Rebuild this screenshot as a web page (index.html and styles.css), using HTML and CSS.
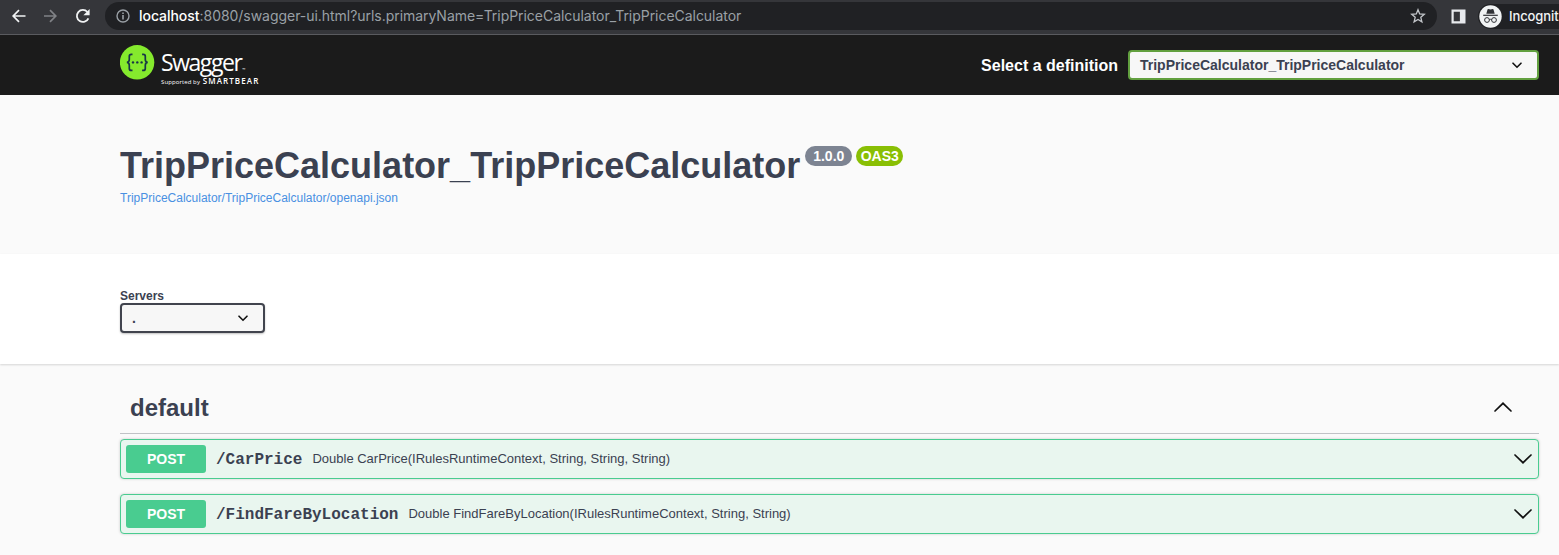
FILE: index.html
```html
<!DOCTYPE html>
<html lang="en">
<head>
<meta charset="utf-8">
<title>Swagger UI</title>
<link rel="stylesheet" href="styles.css">
</head>
<body>
<div class="browser">
  <svg class="nav-icon" width="16" height="16" viewBox="0 0 16 16" fill="none" stroke="#f1f3f4" stroke-width="1.7"><path d="M14.5 8H2.4M8 2.2 2.2 8 8 13.8"/></svg>
  <svg class="nav-icon" width="16" height="16" viewBox="0 0 16 16" fill="none" stroke="#808286" stroke-width="1.7"><path d="M1 8h11.6M7 2.2 12.8 8 7 13.8"/></svg>
  <svg class="nav-icon" width="16" height="16" viewBox="0 0 16 16"><path d="M13.4 10.3A6 6 0 1 1 12.4 4" fill="none" stroke="#f1f3f4" stroke-width="1.8"/><path d="M14.6 1v6.2H8.4z" fill="#f1f3f4"/></svg>
  <div class="address">
    <svg class="info-icon" width="14" height="14" viewBox="0 0 14 14"><circle cx="7" cy="7" r="6" fill="none" stroke="#9aa0a6" stroke-width="1.4"/><path d="M6.2 6h1.6v4.4H6.2zM6.2 3.5h1.6v1.5H6.2z" fill="#9aa0a6"/></svg>
    <span class="url"><b>localhost</b>:8080/swagger-ui.html?urls.primaryName=TripPriceCalculator_TripPriceCalculator</span>
    <svg class="star" width="16" height="16" viewBox="0 0 16 16" fill="none" stroke="#c4c7cb" stroke-width="1.3"><path d="m8 1.7 1.7 4.2 4.6.4-3.5 3 1.1 4.5L8 11.4l-3.9 2.4 1.1-4.5-3.5-3 4.6-.4z"/></svg>
  </div>
  <svg class="panel" width="15" height="15" viewBox="0 0 15 15"><path d="M.5.5h14v14H.5zM2.7 2.7v9.6h6.2V2.7z" fill="#e8eaed" fill-rule="evenodd"/></svg>
  <div class="profile">
    <svg width="23" height="23" viewBox="0 0 23 23"><circle cx="11.5" cy="11.5" r="11.2" fill="#f1f3f4"/><path d="M7.3 8.7 8.5 4.4q.2-.6.8-.4l2.2.6 2.2-.6q.6-.2.8.4l1.2 4.3z" fill="#303236"/><path d="M4.2 10.3h14.6" stroke="#303236" stroke-width="1.2"/><g fill="none" stroke="#303236" stroke-width="1"><circle cx="8" cy="15" r="2.4"/><circle cx="15" cy="15" r="2.4"/><path d="M10.4 14.7q1.1-.8 2.2 0"/></g></svg>
    <span>Incognit</span>
  </div>
</div>
<header class="topbar">
  <div class="logo">
    <svg width="35" height="35" viewBox="0 0 35 35"><circle cx="17.1" cy="17.3" r="17.2" fill="#85ea2d"/><g fill="none" stroke="#173647" stroke-width="1.7"><path d="M12.5 9.4h-1.2q-2 0-2 2v3.2q0 2.6-2.4 2.8 2.4.2 2.4 2.8v3.2q0 2 2 2h1.2M22.1 9.4h1.2q2 0 2 2v3.2q0 2.6 2.4 2.8-2.4.2-2.4 2.8v3.2q0 2-2 2h-1.2"/></g><g fill="#173647"><circle cx="13" cy="17.4" r="1.2"/><circle cx="17.3" cy="17.4" r="1.2"/><circle cx="21.6" cy="17.4" r="1.2"/></g></svg>
    <div class="wordmark">
      <div class="brand">Swagger<small>™</small></div>
      <div class="support">Supported by <b>SMARTBEAR</b></div>
    </div>
  </div>
  <div class="definition">
    <span class="definition-label">Select a definition</span>
    <div class="select definition-select"><span>TripPriceCalculator_TripPriceCalculator</span>
      <svg width="10" height="7" viewBox="0 0 10 7" fill="none" stroke="#111" stroke-width="1.6" stroke-linecap="round"><path d="m1 1.2 4 4 4-4"/></svg></div>
  </div>
</header>
<section class="info">
  <div class="title-row"><h1>TripPriceCalculator_TripPriceCalculator</h1><span class="badge">1.0.0</span><span class="badge oas">OAS3</span></div>
  <a class="spec">TripPriceCalculator/TripPriceCalculator/openapi.json</a>
</section>
<section class="servers">
  <div class="servers-label">Servers</div>
  <div class="select server-select"><span>.</span>
    <svg width="10" height="7" viewBox="0 0 10 7" fill="none" stroke="#111" stroke-width="1.6" stroke-linecap="round"><path d="m1 1.2 4 4 4-4"/></svg></div>
</section>
<main class="operations">
  <div class="tag"><h2>default</h2>
    <svg width="20" height="12" viewBox="0 0 20 12" fill="none" stroke="#111" stroke-width="1.7" stroke-linecap="round"><path d="m2 10 8-7.7 8 7.7"/></svg></div>
  <div class="op"><span class="method">POST</span><span class="path">/CarPrice</span><span class="summary">Double CarPrice(IRulesRuntimeContext, String, String, String)</span>
    <svg width="20" height="12" viewBox="0 0 20 12" fill="none" stroke="#111" stroke-width="1.7" stroke-linecap="round"><path d="m2 2 8 7.7L18 2"/></svg></div>
  <div class="op"><span class="method">POST</span><span class="path">/FindFareByLocation</span><span class="summary">Double FindFareByLocation(IRulesRuntimeContext, String, String)</span>
    <svg width="20" height="12" viewBox="0 0 20 12" fill="none" stroke="#111" stroke-width="1.7" stroke-linecap="round"><path d="m2 2 8 7.7L18 2"/></svg></div>
</main>
</body>
</html>
```
FILE: styles.css
```css
* { box-sizing: border-box; }
body { margin: 0; height: 555px; overflow: hidden; background: #fafafa; color: #3b4151; font-family: "Liberation Sans", Arial, sans-serif; white-space: nowrap; }
svg { display: block; flex: none; }
h1, h2 { margin: 0; }

.browser { display: flex; align-items: center; height: 35px; padding: 0 0 2px 11px; background: #35363a; border-bottom: 1px solid #5a5b5f; overflow: hidden; }
.nav-icon { margin-right: 16px; }
.nav-icon:nth-child(3) { margin-right: 14px; }
.address { display: flex; align-items: center; width: 1332px; height: 28px; margin-right: 14px; padding: 0 11px; border-radius: 14px; background: #202124; flex: none; }
.url { margin-left: 9px; color: #9aa0a6; font: 14px/20px Inter, sans-serif; letter-spacing: -.04px; }
.url b { color: #fff; font-weight: 500; }
.star { margin-left: auto; }
.profile { display: flex; align-items: center; flex: none; width: 120px; height: 25px; margin-left: 12px; padding-left: 1px; border-radius: 13px; background: #202124; color: #f1f3f4; font: 500 13px/20px Inter, sans-serif; letter-spacing: -.1px; }
.profile span { margin-left: 7px; }

.topbar { display: flex; justify-content: space-between; height: 60px; padding: 10px 20px 0 120px; background: #1b1b1b; }
.logo { display: flex; }
.wordmark { margin: 4px 0 0 6px; color: #fff; font-family: "Open Sans", sans-serif; }
.brand { height: 27px; font-size: 23px; line-height: 27px; letter-spacing: -1.45px; }
.brand small { margin-left: 1px; font-size: 4px; letter-spacing: 0; }
.support { font-size: 6px; line-height: 10px; letter-spacing: .1px; }
.support b { margin-left: 1px; font-size: 8px; font-weight: 600; letter-spacing: 1.1px; }
.definition { display: flex; align-items: center; height: 40px; }
.definition-label { margin-right: 10px; padding-top: 2px; color: #fff; font-size: 16px; font-weight: 700; }
.select { display: flex; align-items: center; justify-content: space-between; height: 30px; border-radius: 4px; background: #f7f7f7; font-size: 14px; font-weight: 700; }
.definition-select { width: 411px; padding: 0 15px 0 10px; border: 2px solid #62a03f; }

.info { height: 159px; padding-top: 50px; padding-left: 120px; }
.title-row { display: flex; height: 42px; }
h1 { font-size: 36px; line-height: 42px; }
.badge { width: 47px; height: 20px; margin: 1px 4px 0 5px; border-radius: 10px; background: #7d8492; color: #fff; font-size: 14px; font-weight: 700; line-height: 20px; text-align: center; }
.oas { margin-left: 0; background: #89bf04; }
.spec { display: block; margin-top: 3px; color: #4990e2; font-size: 12px; line-height: 16px; }

.servers { height: 110px; padding: 35px 0 0 120px; background: #fff; box-shadow: 0 1px 2px rgba(0,0,0,.15); }
.servers-label { font-size: 12px; font-weight: 700; line-height: 14px; }
.server-select { width: 145px; padding: 0 15px 0 10px; border: 2px solid #41444e; box-shadow: 0 1px 2px rgba(0,0,0,.25); }

.operations { padding: 20px 20px 0 120px; }
.tag { display: flex; align-items: center; justify-content: space-between; height: 50px; margin-bottom: 5px; padding: 0 26px 2px 10px; border-bottom: 1px solid rgba(59,65,81,.3); }
.tag svg { margin-bottom: 2px; }
h2 { font-size: 24px; line-height: 28px; }
.op { display: flex; align-items: center; height: 40px; margin-bottom: 15px; padding: 0 5px; border: 1px solid #49cc90; border-radius: 4px; background: #e9f6ef; box-shadow: 0 0 3px rgba(0,0,0,.19); }
.method { width: 80px; height: 28px; border-radius: 3px; background: #49cc90; color: #fff; font-size: 14px; font-weight: 700; line-height: 28px; text-align: center; }
.path { margin-left: 10px; padding-top: 2px; font: 700 16px/20px "Liberation Mono", monospace; }
.summary { margin-left: 10px; padding-bottom: 1px; font-size: 13px; }
.op svg { margin-left: auto; }
```
